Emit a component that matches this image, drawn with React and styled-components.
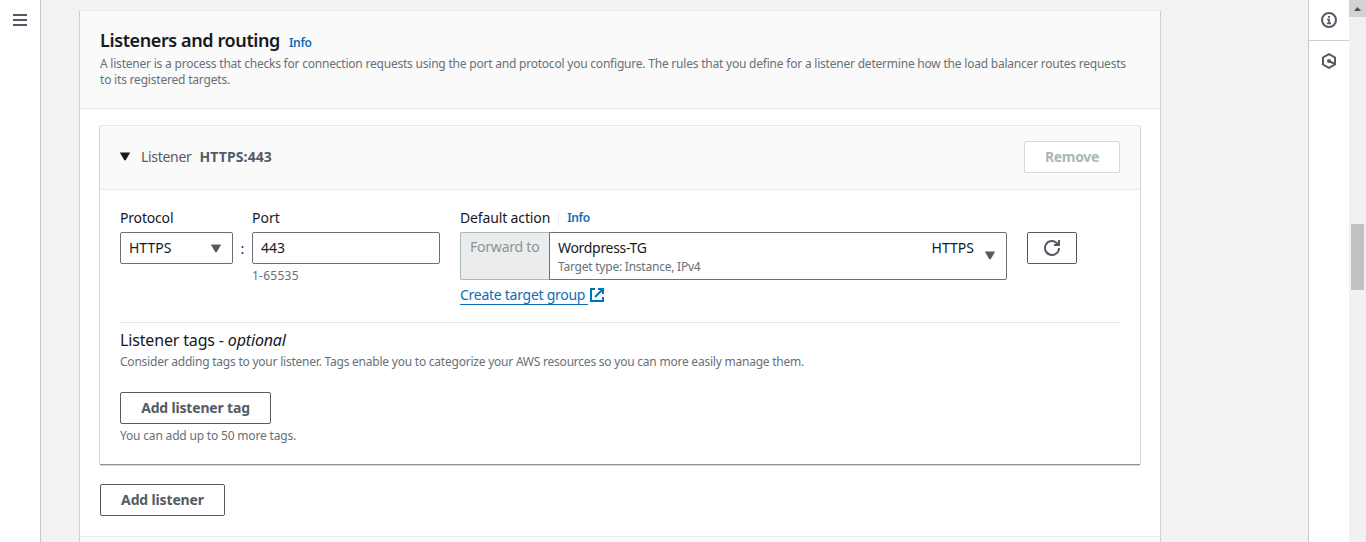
import React from "react";
import styled, { createGlobalStyle } from "styled-components";

const Global = createGlobalStyle`
  * { box-sizing: border-box; }
  html, body { margin: 0; height: 100%; overflow: hidden; }
  body {
    font-family: "Noto Sans", "Open Sans", sans-serif;
    font-size: 14px;
    line-height: 22px;
    color: #16191f;
    background: #f2f3f3;
  }
`;

const Page = styled.div`
  display: flex;
  height: 542px;
  overflow: hidden;
`;

const LeftRail = styled.nav`
  flex: none;
  width: 41px;
  padding: 14px 0 0 13px;
  background: #fff;
  border-right: 1px solid #c5caca;
`;

const MenuIcon = styled.svg`
  display: block;
  width: 14px;
  height: 12px;
`;

const Main = styled.main`
  flex: 1;
  padding: 11px 0 0 39px;
  background: #f2f2f2;
`;

const Card = styled.section`
  width: 1080px;
  height: ${(p) => p.$height}px;
  background: #fff;
  box-shadow: -1px 0 0 #ccd0d0, 1px 0 0 #ccd0d0, 0 -1px 0 #eaeded;
`;

const CardHeader = styled.header`
  height: ${(p) => p.$height || 98}px;
  padding: 18px 20px 0;
  background: #fafafa;
  border-bottom: 1px solid #eaeded;
`;

const TitleRow = styled.div`
  display: flex;
  align-items: baseline;
  gap: 9px;
  height: 27px;
`;

const Text = styled.span`
  display: block;
  white-space: nowrap;
  font-size: ${(p) => p.$size || 14}px;
  line-height: ${(p) => p.$line || 22}px;
  font-weight: ${(p) => p.$weight || 400};
  letter-spacing: ${(p) => p.$track || 0}px;
  color: ${(p) => p.$color || "#16191f"};
`;

const Title = styled.h2`
  margin: 0;
  font-size: 18px;
  line-height: 22px;
  font-weight: 600;
  letter-spacing: ${(p) => p.$track}px;
`;

const InfoLink = styled.a`
  font-size: 12px;
  line-height: 22px;
  font-weight: 600;
  letter-spacing: -0.35px;
  color: #0f6cb6;
`;

const CardBody = styled.div`
  padding: 17px 20px 0;
`;

const ListenerBox = styled.div`
  height: 338px;
  background: #fff;
  box-shadow: -1px 0 0 #d2d6d6, 1px 0 0 #d2d6d6, 0 -1px 0 #e6e9e9, 0 1px 0 #8c9296, 0 2px 1px #d8dbdb;
`;

const ListenerHeader = styled.div`
  display: flex;
  align-items: center;
  height: 64px;
  padding: 0 20px 2px;
  background: #fafafa;
  border-bottom: 1px solid #eaeded;
`;

const Arrow = styled.svg`
  flex: none;
  display: block;
  width: 10px;
  height: 9px;
  fill: ${(p) => p.$color || "#545b64"};
`;

const ListenerName = styled.div`
  display: flex;
  gap: 8px;
  margin-left: 11px;
  flex: 1;
`;

const Button = styled.button`
  display: flex;
  align-items: center;
  justify-content: center;
  width: ${(p) => p.$width}px;
  height: 32px;
  padding: 0;
  font-family: inherit;
  font-size: 14px;
  line-height: 20px;
  font-weight: 700;
  letter-spacing: ${(p) => p.$track || 0}px;
  white-space: nowrap;
  color: ${(p) => (p.$muted ? "#aab7b8" : "#545b64")};
  background: #fff;
  border: 1px solid ${(p) => (p.$muted ? "#d5dbdb" : "#545b64")};
  border-radius: 2px;
`;

const ListenerBody = styled.div`
  padding: 16px 20px 0;
`;

const Fields = styled.div`
  display: flex;
  height: 116px;
`;

const Field = styled.div`
  width: ${(p) => p.$width}px;
`;

const LabelRow = styled.div`
  display: flex;
  align-items: center;
  height: 26px;
  padding-bottom: 2px;
`;

const LabelDivider = styled.span`
  width: 1px;
  height: 15px;
  margin: 0 8px;
  background: #eaeded;
`;

const Control = styled.div`
  display: flex;
  align-items: center;
  justify-content: space-between;
  height: 32px;
  padding: 0 11px 0 8px;
  background: #fff;
  border: 1px solid #687078;
  border-radius: 2px;
`;

const Hint = styled.div`
  padding-top: 1px;
`;

const Colon = styled.span`
  width: 19px;
  padding-top: 32px;
  text-align: center;
  line-height: 22px;
`;

const ActionGroup = styled.div`
  display: flex;
  height: 48px;
`;

const ActionPrefix = styled.div`
  width: 89px;
  padding: 3px 0 0 9px;
  background: #ebeced;
  border: 1px solid #aab7b8;
  border-right: 0;
  border-radius: 2px 0 0 2px;
`;

const TargetSelect = styled.div`
  display: flex;
  flex: 1;
  padding: 4px 11px 0 8px;
  background: #fff;
  border: 1px solid #687078;
  border-radius: 0 2px 2px 0;
`;

const TargetMain = styled.div`
  flex: 1;
`;

const TargetArrow = styled.div`
  padding: 14px 0 0 11px;
`;

const LinkRow = styled.div`
  display: flex;
  align-items: flex-start;
  gap: 2px;
  margin-top: 5px;
`;

const Link = styled.a`
  width: 128px;
  height: 20px;
  white-space: nowrap;
  line-height: 19px;
  letter-spacing: ${(p) => p.$track || 0}px;
  color: #0f6cb6;
  border-bottom: 1px solid #0f6cb6;
`;

const ExternalIcon = styled.svg`
  display: block;
  width: 14px;
  height: 14px;
  margin-top: 3px;
`;

const RefreshSlot = styled.div`
  padding: 26px 0 0 20px;
`;

const Tags = styled.div`
  padding-top: 6px;
  border-top: 1px solid #e4e7e7;
`;

const TagAction = styled.div`
  padding: 21px 0 3px;
`;

const AddRow = styled.div`
  padding-top: 20px;
`;

const RightRail = styled.aside`
  flex: none;
  width: 41px;
  background: #fff;
  border-left: 1px solid #c5caca;
`;

const RailItem = styled.div`
  display: flex;
  align-items: center;
  justify-content: center;
  height: 41px;
  border-bottom: 1px solid ${(p) => (p.$last ? "transparent" : "#ccd0d0")};
`;

const ScrollTrack = styled.div`
  flex: none;
  width: 17px;
  background: #f1f1f1;
`;

const ScrollUp = styled.div`
  display: flex;
  align-items: center;
  justify-content: center;
  height: 17px;
  background: #d2d2d2;
`;

const ScrollThumb = styled.div`
  width: 13px;
  height: 66px;
  margin: 207px 0 0 2px;
  background: #c1c1c1;
`;

const Down = ({ color }) => (
  <Arrow $color={color} viewBox="0 0 10 9">
    <path d="M.4 .5h9.2q.6 0 .3.6L5.8 8.1Q5 9 4.2 8.1L.1 1.1Q-.2.5.4.5Z" />
  </Arrow>
);

export default function App() {
  return (
    <>
      <Global />
      <Page>
        <LeftRail>
          <MenuIcon viewBox="0 0 14 12">
            <path d="M0 1h14M0 6h14M0 11h14" stroke="#545b64" strokeWidth="2" />
          </MenuIcon>
        </LeftRail>

        <Main>
          <Card $height={526}>
            <CardHeader>
              <TitleRow>
                <Title $track={-0.39}>Listeners and routing</Title>
                <InfoLink>Info</InfoLink>
              </TitleRow>
              <Text $size={12} $line={16} $color="#687078" $track={-0.214}>
                A listener is a process that checks for connection requests using the port and protocol you configure. The rules that you define for a listener determine how the load balancer routes requests
              </Text>
              <Text $size={12} $line={16} $color="#687078" $track={-0.2}>
                to its registered targets.
              </Text>
            </CardHeader>

            <CardBody>
              <ListenerBox>
                <ListenerHeader>
                  <Down color="#16191f" />
                  <ListenerName>
                    <Text $color="#545b64" $track={-0.3}>Listener</Text>
                    <Text $color="#545b64" $weight={700} $track={0.1}>HTTPS:443</Text>
                  </ListenerName>
                  <Button $width={96} $muted $track={-0.3}>Remove</Button>
                </ListenerHeader>

                <ListenerBody>
                  <Fields>
                    <Field $width={113}>
                      <LabelRow><Text $track={-0.18}>Protocol</Text></LabelRow>
                      <Control><Text>HTTPS</Text><Down /></Control>
                    </Field>
                    <Colon>:</Colon>
                    <Field $width={188}>
                      <LabelRow><Text>Port</Text></LabelRow>
                      <Control><Text>443</Text></Control>
                      <Hint><Text $size={12} $color="#687078" $track={0.25}>1-65535</Text></Hint>
                    </Field>
                    <Field $width={20} />
                    <Field $width={547}>
                      <LabelRow>
                        <Text $track={-0.14}>Default action</Text>
                        <LabelDivider />
                        <InfoLink>Info</InfoLink>
                      </LabelRow>
                      <ActionGroup>
                        <ActionPrefix><Text $color="#879596" $track={-0.22}>Forward to</Text></ActionPrefix>
                        <TargetSelect>
                          <TargetMain>
                            <Text $track={-0.31}>Wordpress-TG</Text>
                            <Text $size={12} $line={16} $color="#687078" $track={-0.23}>Target type: Instance, IPv4</Text>
                          </TargetMain>
                          <Text>HTTPS</Text>
                          <TargetArrow><Down /></TargetArrow>
                        </TargetSelect>
                      </ActionGroup>
                      <LinkRow>
                        <Link $track={-0.27}>Create target group</Link>
                        <ExternalIcon viewBox="0 0 14 14" fill="none" stroke="#0073bb" strokeWidth="2">
                          <path d="M5 1H1v12h12V9M8 1h5v5M13 1 5 9" />
                        </ExternalIcon>
                      </LinkRow>
                    </Field>
                    <RefreshSlot>
                      <Button $width={50}>
                        <svg width="16" height="16" viewBox="0 0 16 16" fill="none" stroke="#545b64" strokeWidth="2">
                          <path d="M15 8a7 7 0 1 1-2.2-5.1L14.4 5M15 0v5H10" />
                        </svg>
                      </Button>
                    </RefreshSlot>
                  </Fields>

                  <Tags>
                    <Text $size={16} $line={23} $track={-0.16}>Listener tags - <i>optional</i></Text>
                    <Text $size={12} $line={19} $color="#687078" $track={-0.226}>
                      Consider adding tags to your listener. Tags enable you to categorize your AWS resources so you can more easily manage them.
                    </Text>
                    <TagAction><Button $width={151} $track={-0.18}>Add listener tag</Button></TagAction>
                    <Text $size={12} $line={18} $color="#687078" $track={-0.18}>You can add up to 50 more tags.</Text>
                  </Tags>
                </ListenerBody>
              </ListenerBox>
              <AddRow><Button $width={125} $track={-0.15}>Add listener</Button></AddRow>
            </CardBody>
          </Card>
          <Card $height={20}>
            <CardHeader $height={20} />
          </Card>
        </Main>

        <RightRail>
          <RailItem>
            <svg width="16" height="16" viewBox="0 0 16 16" fill="none" stroke="#545b64" strokeWidth="2">
              <circle cx="8" cy="8" r="7" />
              <path d="M6 7.5h3M8 7v4.5M6 11.3h4M7 4.8h2" strokeWidth="1.7" />
            </svg>
          </RailItem>
          <RailItem $last>
            <svg width="16" height="16" viewBox="0 0 16 16" fill="none" stroke="#545b64" strokeWidth="2">
              <path d="M8 1.1 14 4.5v7L8 14.9 2 11.5v-7Z" />
              <path d="M8 8l6 3.2" />
              <circle cx="8" cy="8" r="2" fill="#545b64" stroke="none" />
            </svg>
          </RailItem>
        </RightRail>

        <ScrollTrack>
          <ScrollUp>
            <svg width="7" height="4" viewBox="0 0 7 4"><path d="M0 4 3.5 0 7 4Z" fill="#505050" /></svg>
          </ScrollUp>
          <ScrollThumb />
        </ScrollTrack>
      </Page>
    </>
  );
}
